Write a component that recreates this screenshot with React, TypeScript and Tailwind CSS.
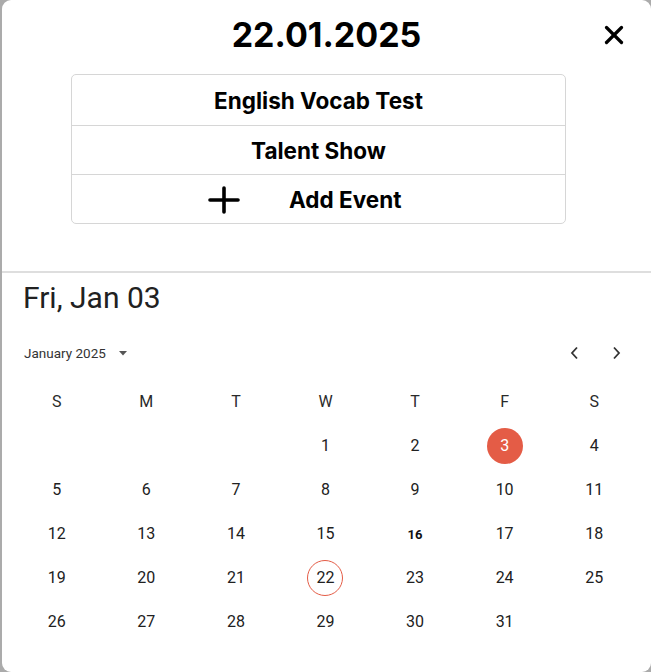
import { X } from "lucide-react"

const weekDays = ["S", "M", "T", "W", "T", "F", "S"]

// January 2025 starts on a Wednesday
const cells: (number | null)[] = [
  null, null, null,
  ...Array.from({ length: 31 }, (_, i) => i + 1),
  null,
]

const events = ["English Vocab Test", "Talent Show"]

function DayCell({ day }: { day: number | null }) {
  if (day === null) return <div className="h-[44px]" />
  const selected = day === 3
  const marked = day === 22
  const today = day === 16
  return (
    <div className="h-[44px] flex items-center justify-center">
      <div
        className={
          "w-[36px] h-[36px] rounded-full flex items-center justify-center " +
          (selected
            ? "bg-[#e45c46] text-white text-[16px]"
            : marked
            ? "border border-[#e45c46] text-[#212121] text-[16px]"
            : today
            ? "text-[#111] font-bold text-[13px] pt-[2px]"
            : "text-[#212121] text-[16px]")
        }
      >
        {day}
      </div>
    </div>
  )
}

export default function App() {
  return (
    <div className="w-[651px] h-[672px] bg-[#ababab] overflow-hidden">
      <div className="ml-[2px] h-[672px] bg-white rounded-[9px] flex flex-col">
        <div className="relative h-[271px] shrink-0 font-['Inter',sans-serif]">
          <h1 className="pt-[15px] h-[55px] text-center text-[34px] leading-[40px] font-bold text-black">
            22.01.2025
          </h1>
          <button className="absolute top-[20px] left-[597px] w-[30px] h-[30px] flex items-center justify-center text-black">
            <X className="w-[32px] h-[32px]" strokeWidth={2.6} />
          </button>

          <div className="mt-[19px] ml-[69px] w-[495px] border border-[#d6d6d6] rounded-[5px] flex flex-col">
            {events.map((ev, i) => (
              <div
                key={ev}
                className={
                  "flex items-center justify-center border-b border-[#d6d6d6] text-[22.5px] leading-[28px] font-bold text-black " +
                  (i === 0 ? "h-[51px] pt-[1px]" : "h-[49px] pt-[1px]")
                }
              >
                {ev}
              </div>
            ))}
            <div className="h-[48px] pt-[1px] flex items-center pl-[136px] text-[22.5px] leading-[28px] font-bold text-black">
              <svg width="32" height="28" viewBox="0 0 32 28" fill="none" stroke="black" strokeWidth="3.6" strokeLinecap="round">
                <line x1="2" y1="14" x2="30" y2="14" />
                <line x1="16" y1="2" x2="16" y2="26" />
              </svg>
              <span className="ml-[49px]">Add Event</span>
            </div>
          </div>
        </div>

        <div className="h-[2px] bg-[#dedede] shrink-0" />

        <div className="font-['Roboto',sans-serif]">
          <div className="pt-[7px] pl-[21px] h-[43px] text-[30px] leading-[36px] text-[#212121]">
            Fri, Jan 03
          </div>

          <div className="mt-[27px] h-[20px] flex items-center justify-between pl-[22px] pr-[22px]">
            <div className="flex items-center text-[13.5px] font-normal text-[#333]">
              <span>January 2025</span>
              <svg className="ml-[13px]" width="8" height="5" viewBox="0 0 8 5">
                <path d="M0 0 L8 0 L4 4.5 Z" fill="#555" />
              </svg>
            </div>
            <div className="flex items-center gap-[19px]">
              <div className="w-[24px] h-[24px] flex items-center justify-center">
                <svg width="10" height="14" viewBox="0 0 10 14" fill="none" stroke="#333" strokeWidth="1.8">
                  <path d="M8 1.5 L3 7 L8 12.5" />
                </svg>
              </div>
              <div className="w-[24px] h-[24px] flex items-center justify-center">
                <svg width="10" height="14" viewBox="0 0 10 14" fill="none" stroke="#333" strokeWidth="1.8">
                  <path d="M2 1.5 L7 7 L2 12.5" />
                </svg>
              </div>
            </div>
          </div>

          <div className="mt-[17px] ml-[10px] w-[627px] grid grid-cols-7">
            {weekDays.map((d, i) => (
              <div key={i} className="h-[44px] flex items-center justify-center text-[16px] text-[#2a2a2a]">
                {d}
              </div>
            ))}
            {cells.map((d, i) => (
              <DayCell key={i} day={d} />
            ))}
          </div>
        </div>
      </div>
    </div>
  )
}
